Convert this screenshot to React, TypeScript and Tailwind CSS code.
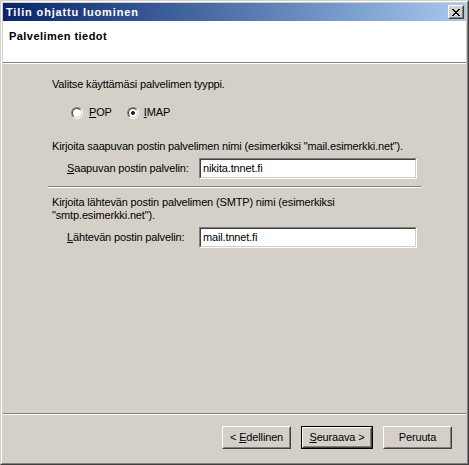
import React from 'react'

// classic 3D helpers
function Radio({ checked }: { checked?: boolean }) {
  return (
    <span className="relative inline-block w-[12px] h-[12px] rounded-full border border-t-[#808080] border-l-[#808080] border-b-white border-r-white">
      <span className="absolute inset-0 rounded-full border border-t-[#404040] border-l-[#404040] border-b-[#d4d0c8] border-r-[#d4d0c8] bg-white" />
      {checked && <span className="absolute left-[4px] top-[4px] w-[2px] h-[2px] rounded-full bg-black outline outline-1 outline-black" />}
    </span>
  )
}

function TextBox({ value }: { value: string }) {
  return (
    <div className="w-[218px] h-[21px] border border-t-[#808080] border-l-[#808080] border-b-white border-r-white">
      <div className="h-full border border-t-[#404040] border-l-[#404040] border-b-[#d4d0c8] border-r-[#d4d0c8] bg-white pl-[2px] flex items-center">
        {value}
      </div>
    </div>
  )
}

function Groove({ className }: { className: string }) {
  return (
    <div className={className}>
      <div className="h-px bg-[#808080]" />
      <div className="h-px bg-white" />
    </div>
  )
}

function Button({ children, isDefault }: { children: React.ReactNode; isDefault?: boolean }) {
  const inner = (
    <div className="h-full border border-t-white border-l-white border-b-[#404040] border-r-[#404040]">
      <div className="h-full border border-t-[#d4d0c8] border-l-[#d4d0c8] border-b-[#808080] border-r-[#808080] flex items-center justify-center">
        {children}
      </div>
    </div>
  )
  if (isDefault) {
    return <div className="w-[72px] h-[23px] border border-black">{inner}</div>
  }
  return <div className="w-[69px] h-[23px]">{inner}</div>
}

export default function App() {
  return (
    <div className="w-[469px] h-[465px] bg-[#d4d0c8] font-['Liberation_Sans',Arial,sans-serif] text-[11px] leading-[13px] tracking-[-0.15px] text-black">
      <div className="h-full border border-t-[#d4d0c8] border-l-[#d4d0c8] border-b-[#404040] border-r-[#404040]">
        <div className="h-full border border-t-white border-l-white border-b-[#808080] border-r-[#808080] p-px flex flex-col">
          {/* Title bar */}
          <div className="h-[18px] shrink-0 flex items-center justify-between bg-gradient-to-r from-[#0a246a] to-[#a6caf0] pl-[3px] pr-[2px]">
            <span className="text-white font-bold tracking-[0.85px]">Tilin ohjattu luominen</span>
            <div className="w-[16px] h-[14px] bg-[#d4d0c8] border border-t-white border-l-white border-b-[#404040] border-r-[#404040]">
              <div className="h-full border border-t-[#d4d0c8] border-l-[#d4d0c8] border-b-[#808080] border-r-[#808080] flex items-center justify-center">
                <svg width="8" height="7" viewBox="0 0 8 7" shapeRendering="crispEdges">
                  <path d="M0 0h2v1H0zM6 0h2v1H6zM1 1h2v1H1zM5 1h2v1H5zM2 2h4v1H2zM3 3h2v1H3zM2 4h4v1H2zM1 5h2v1H1zM5 5h2v1H5zM0 6h2v1H0zM6 6h2v1H6z" fill="#000" />
                </svg>
              </div>
            </div>
          </div>

          {/* Header */}
          <div className="h-[41px] shrink-0 bg-white pl-[6px] pt-[9px]">
            <span className="font-bold tracking-[0.45px]">Palvelimen tiedot</span>
          </div>
          <Groove className="shrink-0" />

          {/* Body */}
          <div className="flex-1 flex flex-col pl-[49px]">
            <div className="mt-[14px]">Valitse käyttämäsi palvelimen tyyppi.</div>
            <div className="mt-[15px] ml-[19px] h-[13px] flex items-center">
              <Radio />
              <span className="ml-[6px]"><span className="underline">P</span>OP</span>
              <span className="ml-[15px] flex items-center">
                <Radio checked />
                <span className="ml-[5px]"><span className="underline">I</span>MAP</span>
              </span>
            </div>
            <div className="mt-[21px]">Kirjoita saapuvan postin palvelimen nimi (esimerkiksi "mail.esimerkki.net").</div>
            <div className="mt-[5px] ml-[15px] flex items-center">
              <span className="w-[132px]"><span className="underline">S</span>aapuvan postin palvelin:</span>
              <TextBox value="nikita.tnnet.fi" />
            </div>
            <Groove className="mt-[7px] -ml-[4px] w-[373px]" />
            <div className="mt-[8px]">
              Kirjoita lähtevän postin palvelimen (SMTP) nimi (esimerkiksi
              <br />
              "smtp.esimerkki.net").
            </div>
            <div className="mt-[5px] ml-[15px] flex items-center">
              <span className="w-[132px]"><span className="underline">L</span>ähtevän postin palvelin:</span>
              <TextBox value="mail.tnnet.fi" />
            </div>
          </div>

          {/* Footer */}
          <Groove className="shrink-0" />
          <div className="h-[47px] shrink-0 flex justify-end items-start pt-[11px] pr-[14px] gap-[10px]">
            <Button>&lt; <span className="underline ml-[3px]">E</span>dellinen</Button>
            <Button isDefault><span className="underline">S</span>euraava &gt;</Button>
            <Button>Peruuta</Button>
          </div>
        </div>
      </div>
    </div>
  )
}
